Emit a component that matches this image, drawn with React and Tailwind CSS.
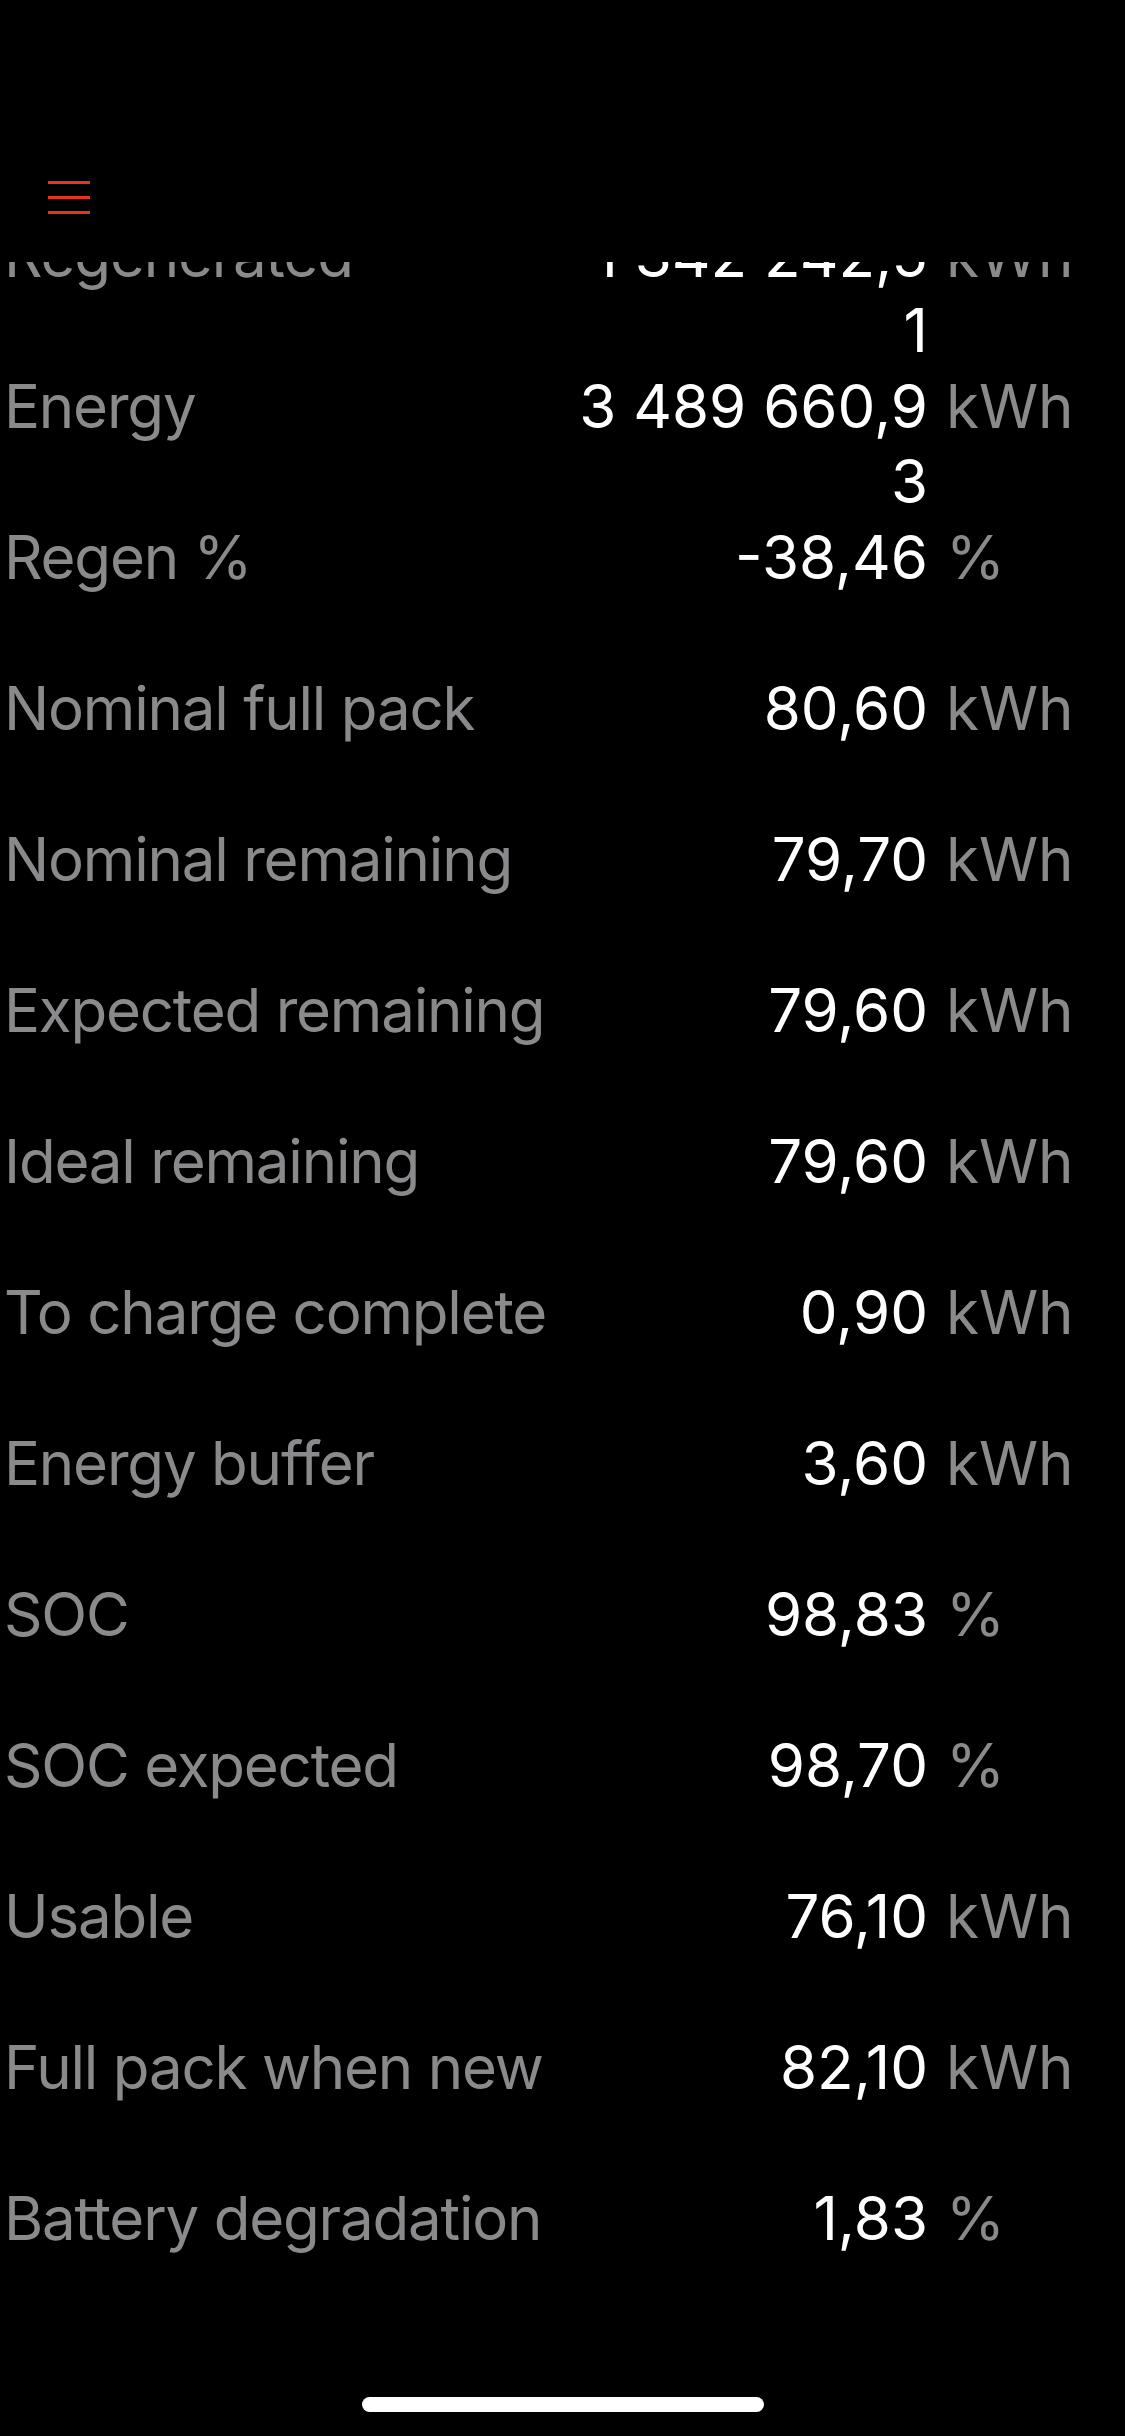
import React from "react";

const NB = "\u00a0";
const rows = [
  ["Regenerated", `1${NB}342${NB}242,51`, "kWh"],
  ["Energy", `3${NB}489${NB}660,93`, "kWh"],
  ["Regen %", "-38,46", "%"],
  ["Nominal full pack", "80,60", "kWh"],
  ["Nominal remaining", "79,70", "kWh"],
  ["Expected remaining", "79,60", "kWh"],
  ["Ideal remaining", "79,60", "kWh"],
  ["To charge complete", "0,90", "kWh"],
  ["Energy buffer", "3,60", "kWh"],
  ["SOC", "98,83", "%"],
  ["SOC expected", "98,70", "%"],
  ["Usable", "76,10", "kWh"],
  ["Full pack when new", "82,10", "kWh"],
  ["Battery degradation", "1,83", "%"],
];

export default function App() {
  return (
    <div
      className="relative w-[1125px] h-[2436px] bg-black flex flex-col overflow-hidden"
      style={{ fontFamily: 'Inter, "Liberation Sans", Arial, sans-serif' }}
    >
      <header className="h-[262px] shrink-0 pl-[48px] pt-[181px]">
        <button className="flex flex-col gap-[12px] w-[42px]" aria-label="Menu">
          <span className="block h-[3px] w-[42px] bg-[#e8341f]" />
          <span className="block h-[3px] w-[42px] bg-[#e8341f]" />
          <span className="block h-[3px] w-[42px] bg-[#e8341f]" />
        </button>
      </header>
      <main className="flex-1 overflow-hidden">
        <div className="-mt-[82px] flex flex-col">
          {rows.map(([label, value, unit]) => (
            <div
              key={label}
              className="h-[151px] shrink-0 flex items-start pt-[38px] text-[60px] leading-[75px]"
            >
              <div className="flex-1 pl-[4px] text-[#8a8a8d] whitespace-nowrap tracking-[-1.2px]">
                {label}
              </div>
              <div className="w-[350px] text-right text-white break-all">{value}</div>
              <div className="w-[197px] pl-[18px] text-[#8a8a8d]">{unit}</div>
            </div>
          ))}
        </div>
      </main>
      <div className="absolute bottom-[24px] left-[362px] w-[402px] h-[15px] rounded-full bg-white" />
    </div>
  );
}
